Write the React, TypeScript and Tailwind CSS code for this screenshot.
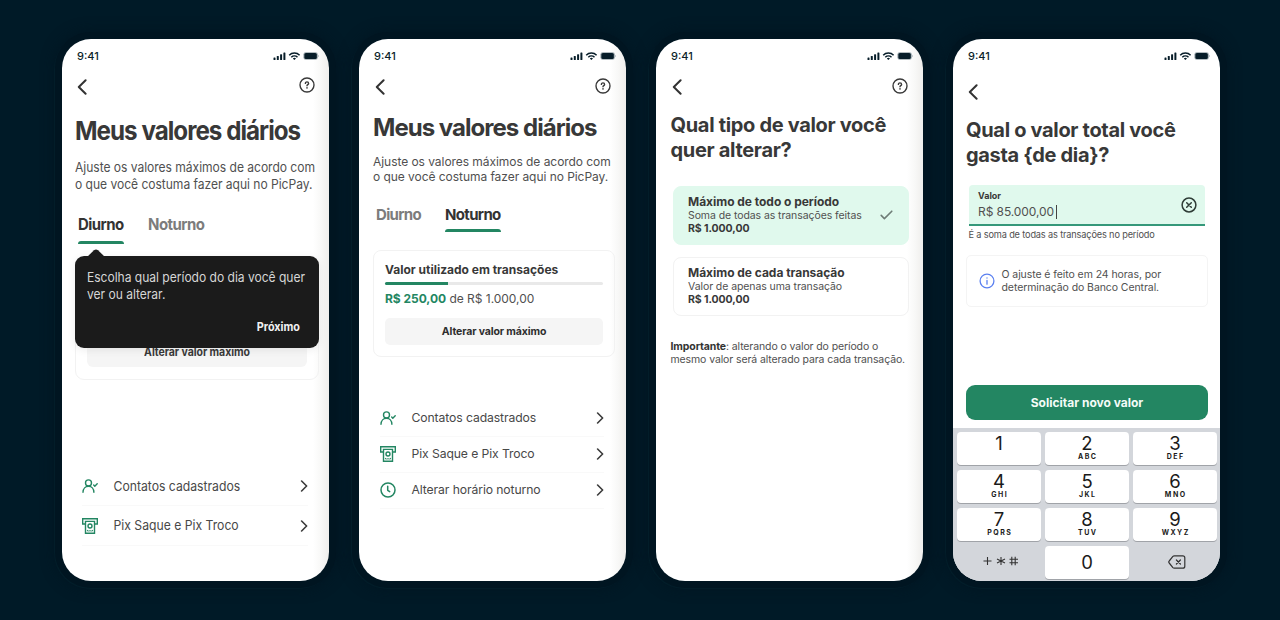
import React from "react";

type ChildrenProps = { children?: React.ReactNode; className?: string };

const StatusBar = () => (
  <div className="flex h-[34px] shrink-0 items-center justify-between pl-[15px] pr-[10px]">
    <span className="text-[11px] font-medium leading-none text-[#0b1f2a]">9:41</span>
    <svg width="46" height="10" viewBox="0 0 46 10" fill="#071d29">
      <rect x="0.5" y="6.4" width="2" height="2.6" rx=".6" />
      <rect x="3.8" y="5" width="2" height="4" rx=".6" />
      <rect x="7.1" y="3.2" width="2" height="5.8" rx=".6" />
      <rect x="10.4" y="1.4" width="2" height="7.6" rx=".6" />
      <path d="M16.2 4.2a7.3 7.3 0 0 1 10.4 0M18.3 6.2a4.4 4.4 0 0 1 6.2 0" fill="none" stroke="#071d29" strokeWidth="1.5" />
      <path d="M19.8 7.4a2.3 2.3 0 0 1 3.2 0L21.4 9z" />
      <rect x="30.4" y="1.2" width="14.4" height="7.6" rx="2.4" fill="#9aa6ac" />
      <rect x="31.4" y="2" width="12.4" height="6" rx="1.6" />
      <path d="M45.3 3.8c.9.4.9 2 0 2.4z" fill="#9aa6ac" />
    </svg>
  </div>
);

const Phone = ({ children, className = "" }: ChildrenProps) => (
  <section
    className={`flex h-[542px] w-[267px] shrink-0 flex-col overflow-hidden rounded-[29px] shadow-[0_0_0_7px_#001521,-1px_1px_0_7px_#021d29,0_0_14px_7px_#001521] ${className}`}
  >
    <StatusBar />
    {children}
  </section>
);

const shaded = "bg-[linear-gradient(to_right,#fff_94%,#f8f8f7_97%,#efeeec_100%)]";

const BackIcon = () => (
  <svg width="10" height="16" viewBox="0 0 10 16" fill="none" stroke="#333" strokeWidth="2" strokeLinecap="round" strokeLinejoin="round">
    <path d="M8.6 1.2 1.8 8l6.8 6.8" />
  </svg>
);

const HelpIcon = () => (
  <svg width="16" height="16" viewBox="0 0 16 16" fill="none" stroke="#3a3a3a" strokeWidth="1.4" strokeLinecap="round" strokeLinejoin="round">
    <circle cx="8" cy="8" r="7" />
    <path d="M6.4 6.4c0-2.1 3.2-2 3.2 0C9.6 7.6 8 7.6 8 8.7" />
    <path d="M8 10.9v.1" strokeWidth="1.6" />
  </svg>
);

const ContactIcon = () => (
  <svg width="16" height="14" viewBox="0 0 16 14" fill="none" stroke="#238662" strokeWidth="1.4" strokeLinecap="round" strokeLinejoin="round">
    <circle cx="6.5" cy="3.9" r="3" />
    <path d="M1 13.2c.1-3.5 2.4-5.900 5.500-5.900s5.300 2.400 5.400 5.900" />
    <path d="m11.700 6.100 1.100 1.100 2.400-2.400" />
  </svg>
);

const CashIcon = () => (
  <svg width="16" height="16" viewBox="0 0 16 16" fill="none" stroke="#238662" strokeWidth="1.4">
    <path d="M3 6H.7V.7h14.6V6H13" />
    <path d="M3.5 3.4h9v11.9h-9z" />
    <circle cx="8" cy="8" r="2" />
    <path d="M5.2 12.1l1.300 1.300M10.800 12.100l-1.300 1.300M8 12v1.500" strokeWidth="1.2" />
  </svg>
);

const ClockIcon = () => (
  <svg width="16" height="16" viewBox="0 0 16 16" fill="none" stroke="#238662" strokeWidth="1.5" strokeLinecap="round" strokeLinejoin="round">
    <circle cx="8" cy="8" r="7" />
    <path d="M7.7 4.3v4l2 1.3" />
  </svg>
);

const ChevronIcon = () => (
  <svg width="8" height="12" viewBox="0 0 8 12" fill="none" stroke="#3a3a3a" strokeWidth="1.6" strokeLinecap="round" strokeLinejoin="round">
    <path d="M1.6 1 6.6 6l-5 5" />
  </svg>
);

const Row = ({
  icon,
  className = "",
  labelClass = "",
  children,
}: ChildrenProps & { icon: React.ReactNode; labelClass?: string }) => (
  <div className={`flex items-center border-b border-[#f9f9f9] text-[#484848] ${className}`}>
    <span className="flex w-[31.5px] shrink-0 items-center">{icon}</span>
    <span className={`flex-1 whitespace-nowrap pt-[1px] ${labelClass}`}>{children}</span>
    <ChevronIcon />
  </div>
);

// this screen's type is slightly taller than on the other ones
const DayScreen = () => (
  <Phone className={shaded}>
    <div className="flex h-[28px] justify-between pl-[15px] pr-[14px] pt-[6px]">
      <BackIcon />
      <span className="-mt-[2px]"><HelpIcon /></span>
    </div>
    <h2 className="mt-[15px] scale-y-[1.08] whitespace-nowrap pl-[13px] text-[24.2px] font-bold leading-[30px] tracking-[-0.98px] text-[#383838]">
      Meus valores diários
    </h2>
    <p className="mt-[14px] scale-y-[1.08] whitespace-nowrap pl-[13px] text-[12.1px] leading-[15.7px] tracking-[-0.04px] text-[#505050]">
      Ajuste os valores máximos de acordo com
      <br />o que você costuma fazer aqui no PicPay.
    </p>
    <div className="relative mt-[24px] flex gap-[24px] pl-[16px] text-[15px] font-bold leading-[20px] tracking-[-0.55px]">
      <div className="w-[46px] text-[#333]">
        <div className="scale-y-[1.08]">Diurno</div>
        <div className="mt-[5.5px] h-[3px] rounded-t-[3px] bg-[#238662]" />
      </div>
      <div className="h-[20px] scale-y-[1.08] text-[#7c7c7c]">Noturno</div>
      <div className="absolute left-[13px] top-[41px] z-10 h-[91.5px] w-[244px] rounded-[9px] bg-[#1b1b1b] px-[12px] pt-[13px] font-normal text-[#d6d6d6] shadow-[0_2px_8px_rgba(0,0,0,0.08)]">
        <svg className="absolute -top-[7px] left-[12px]" width="18" height="8" viewBox="0 0 18 8" fill="#1b1b1b">
          <path d="M0 8 7 1.3q2-1.8 4 0L18 8z" />
        </svg>
        <p className="scale-y-[1.08] whitespace-nowrap pt-[1px] text-[12.1px] leading-[15.7px] tracking-[-0.03px]">
          Escolha qual período do dia você quer
          <br />
          ver ou alterar.
        </p>
        <div className="mt-[18.5px] scale-y-[1.08] pr-[7px] text-right text-[10.8px] font-bold leading-[16px] tracking-normal text-[#f1f1f1]">
          Próximo
        </div>
      </div>
    </div>
    <div className="mx-[10px] ml-[13px] mt-[14px] flex h-[122px] shrink-0 flex-col justify-end rounded-[9px] border border-[#f2f2f2] px-[11px] pb-[12px]">
      <div className="h-[28px] rounded-[6px] bg-[#f5f5f5]">
        <div className="scale-y-[1.08] text-center text-[10.5px] font-bold leading-[27px] tracking-[-0.05px] text-[#3a3a3a]">
          Alterar valor máximo
        </div>
      </div>
    </div>
    <div className="ml-[20px] mr-[21px] mt-[87px] text-[12.2px]">
      <Row className="h-[39.5px]" labelClass="scale-y-[1.08]" icon={<ContactIcon />}>Contatos cadastrados</Row>
      <Row className="h-[40px]" labelClass="scale-y-[1.08]" icon={<CashIcon />}>Pix Saque e Pix Troco</Row>
    </div>
  </Phone>
);

const NightScreen = () => (
  <Phone className={shaded}>
    <div className="flex h-[28px] justify-between pl-[16px] pr-[15px] pt-[6px]">
      <BackIcon />
      <span className="-mt-[1px]"><HelpIcon /></span>
    </div>
    <h2 className="mt-[12px] whitespace-nowrap pl-[14px] text-[24px] font-bold leading-[30px] tracking-[-0.97px] text-[#383838]">
      Meus valores diários
    </h2>
    <p className="mt-[10.5px] whitespace-nowrap pl-[14px] text-[12px] leading-[15.5px] tracking-[-0.05px] text-[#505050]">
      Ajuste os valores máximos de acordo com
      <br />o que você costuma fazer aqui no PicPay.
    </p>
    <div className="mt-[20px] flex gap-[24px] pl-[17px] text-[15px] font-bold leading-[20px] tracking-[-0.65px]">
      <div className="w-[45px] text-[#7c7c7c]">Diurno</div>
      <div className="w-[56px] text-[#333]">
        Noturno
        <div className="mt-[4.5px] h-[3px] rounded-t-[3px] bg-[#238662]" />
      </div>
    </div>
    <div className="ml-[14px] mt-[17.5px] h-[107px] w-[242px] shrink-0 rounded-[8px] border border-[#f2f2f2] px-[11px] pt-[11px]">
      <div className="text-[12px] font-bold leading-[16px] text-[#383838]">Valor utilizado em transações</div>
      <div className="mt-[4.5px] h-[3px] rounded-full bg-[#e9e9e9]">
        <div className="h-full w-[63px] rounded-l-full bg-[#238662]" />
      </div>
      <div className="mt-[6px] text-[12px] leading-[16px] tracking-[-0.03px] text-[#505050]">
        <b className="text-[#238662]">R$ 250,00</b> de R$ 1.000,00
      </div>
      <div className="mt-[11px] h-[27px] rounded-[5px] bg-[#f5f5f5] text-center text-[10.5px] font-bold leading-[27px] tracking-[-0.12px] text-[#2d2d2d]">
        Alterar valor máximo
      </div>
    </div>
    <div className="ml-[21px] mr-[22px] mt-[44px] text-[12.2px] tracking-[-0.1px]">
      <Row className="h-[36px]" icon={<ContactIcon />}>Contatos cadastrados</Row>
      <Row className="h-[36px]" icon={<CashIcon />}>Pix Saque e Pix Troco</Row>
      <Row className="h-[36px]" icon={<ClockIcon />}>Alterar horário noturno</Row>
    </div>
  </Phone>
);

const OptionCard = ({ title, text, selected = false }: { title: string; text: string; selected?: boolean }) => (
  <div
    className={`flex h-[59px] w-[236px] items-center justify-between rounded-[8px] border pl-[14px] pr-[15px] ${
      selected ? "border-[#e0f9ed] bg-[#e0f9ed]" : "border-[#f2f2f2]"
    }`}
  >
    <div className="whitespace-nowrap pt-[1px] text-[10.5px] leading-[13.5px] tracking-[-0.08px] text-[#505050]">
      <div className="text-[12px] font-bold tracking-[-0.03px] text-[#383838]">{title}</div>
      <div>{text}</div>
      <div className="font-bold text-[#383838]">R$ 1.000,00</div>
    </div>
    {selected && (
      <svg width="13" height="10" viewBox="0 0 13 10" fill="none" stroke="#6f7d77" strokeWidth="1.6" strokeLinecap="round" strokeLinejoin="round">
        <path d="m1.2 5.4 3.2 3.2 7.4-7.4" />
      </svg>
    )}
  </div>
);

const TypeScreen = () => (
  <Phone className={shaded}>
    <div className="flex h-[28px] justify-between pl-[16px] pr-[15px] pt-[6px]">
      <BackIcon />
      <span className="-mt-[1px]"><HelpIcon /></span>
    </div>
    <h2 className="mt-[12px] whitespace-nowrap pl-[14.5px] text-[20px] font-bold leading-[25px] tracking-[-0.32px] text-[#383838]">
      Qual tipo de valor você
      <br />
      quer alterar?
    </h2>
    <div className="ml-[17px] mt-[22.5px] flex flex-col gap-[12px]">
      <OptionCard selected title="Máximo de todo o período" text="Soma de todas as transações feitas" />
      <OptionCard title="Máximo de cada transação" text="Valor de apenas uma transação" />
    </div>
    <p className="ml-[14.5px] mt-[24px] whitespace-nowrap text-[10.5px] leading-[13.3px] tracking-[-0.11px] text-[#505050]">
      <b className="text-[#333]">Importante</b>: alterando o valor do período o
      <br />
      mesmo valor será alterado para cada transação.
    </p>
  </Phone>
);

const keys = [
  ["1", ""],
  ["2", "ABC"],
  ["3", "DEF"],
  ["4", "GHI"],
  ["5", "JKL"],
  ["6", "MNO"],
  ["7", "PQRS"],
  ["8", "TUV"],
  ["9", "WXYZ"],
];

const Keyboard = () => (
  <div className="mt-auto grid h-[153px] shrink-0 auto-rows-[33px] grid-cols-3 gap-x-[4px] gap-y-[5.2px] bg-[#d3d6db] pl-[4px] pr-[3px] pt-[3.5px] text-[#1a1a1a]">
    {keys.map(([digit, letters]) => (
      <div key={digit} className="flex flex-col items-center rounded-[4px] bg-white pt-[1.5px] shadow-[0_1px_0_#a0a3a8]">
        <span className="text-[18.5px] leading-[20px]">{digit}</span>
        <span className="pl-[1.5px] text-[7px] font-bold leading-[7px] tracking-[1.5px]">{letters}</span>
      </div>
    ))}
    <div className="flex items-center justify-center pb-[4px] pl-[3px]">
      <svg width="36" height="10" viewBox="0 0 36 10" fill="none" stroke="#333" strokeWidth="1.1">
        <path d="M.5 5h8M4.5 1v8" />
        <path d="M18 1v8M14 3l8 4M14 7l8-4" />
        <path d="M28.8.8v8.4M32.2.8v8.4M26.5 3.3h8.5M26.5 6.7h8.5" />
      </svg>
    </div>
    <div className="flex items-center justify-center rounded-[4px] bg-white text-[18.5px] leading-none shadow-[0_1px_0_#a0a3a8]">0</div>
    <div className="flex items-center justify-center pb-[2px] pl-[4px]">
      <svg width="18" height="14" viewBox="0 0 18 14" fill="none" stroke="#333" strokeWidth="1.2" strokeLinecap="round" strokeLinejoin="round">
        <path d="M6.3.8h8.5a2 2 0 0 1 2 2v8.4a2 2 0 0 1-2 2H6.3a2 2 0 0 1-1.4-.6L1.200 8a1.300 1.300 0 0 1 0-2l3.700-4.600A2 2 0 0 1 6.300.8z" />
        <path d="m8.4 5 4 4M12.4 5l-4 4" />
      </svg>
    </div>
  </div>
);

const ValueScreen = () => (
  <Phone className="bg-white">
    <div className="flex h-[28px] pl-[15px] pt-[11px]">
      <BackIcon />
    </div>
    <h2 className="mt-[17px] whitespace-nowrap pl-[13px] text-[20px] font-bold leading-[25.2px] tracking-[-0.32px] text-[#383838]">
      Qual o valor total você
      <br />
      gasta {"{de dia}"}?
    </h2>
    <div className="ml-[16px] mt-[17px] flex h-[41px] w-[236px] items-center justify-between rounded-t-[4px] border-b-2 border-[#35987a] bg-[#e0f9ed] pl-[9px] pr-[8px]">
      <div>
        <div className="text-[9px] font-bold leading-[14px] text-[#383838]">Valor</div>
        <div className="flex items-center text-[12px] leading-[17px] tracking-[-0.08px] text-[#505050]">
          R$ 85.000,00
          <span className="ml-[2px] h-[14px] w-px bg-[#444]" />
        </div>
      </div>
      <svg width="16" height="16" viewBox="0 0 16 16" fill="none" stroke="#2f3d37" strokeWidth="1.5" strokeLinecap="round">
        <circle cx="8" cy="8" r="6.9" />
        <path d="m5.7 5.7 4.6 4.6M10.3 5.7l-4.6 4.6" />
      </svg>
    </div>
    <div className="ml-[15.5px] mt-[2px] whitespace-nowrap text-[9.2px] leading-[13px] tracking-[-0.15px] text-[#505050]">
      É a soma de todas as transações no período
    </div>
    <div className="ml-[13px] mt-[14px] flex h-[52px] w-[242px] items-center rounded-[5px] border border-[#f4f4f4] pl-[11.5px] text-[10.5px] leading-[13.5px] tracking-[-0.08px] text-[#505050]">
      <svg className="mr-[7px]" width="16" height="16" viewBox="0 0 16 16" fill="none" stroke="#5b80f0" strokeWidth="1.3" strokeLinecap="round">
        <circle cx="8" cy="8" r="6.9" />
        <path d="M8 7.5v3.7M8 4.9v.1" />
      </svg>
      <p className="whitespace-nowrap">
        O ajuste é feito em 24 horas, por
        <br />
        determinação do Banco Central.
      </p>
    </div>
    <button className="ml-[13px] mt-[77.5px] h-[35.5px] w-[242px] shrink-0 rounded-[9px] bg-[#238662] pt-[1px] text-[12px] font-bold text-[#f3fbf7]">
      Solicitar novo valor
    </button>
    <Keyboard />
  </Phone>
);

export default function App() {
  return (
    <main className="flex h-[620px] w-[1280px] gap-[30px] overflow-hidden bg-[#001a27] pl-[62px] pt-[39px] font-['Inter',sans-serif]">
      <DayScreen />
      <NightScreen />
      <TypeScreen />
      <ValueScreen />
    </main>
  );
}
